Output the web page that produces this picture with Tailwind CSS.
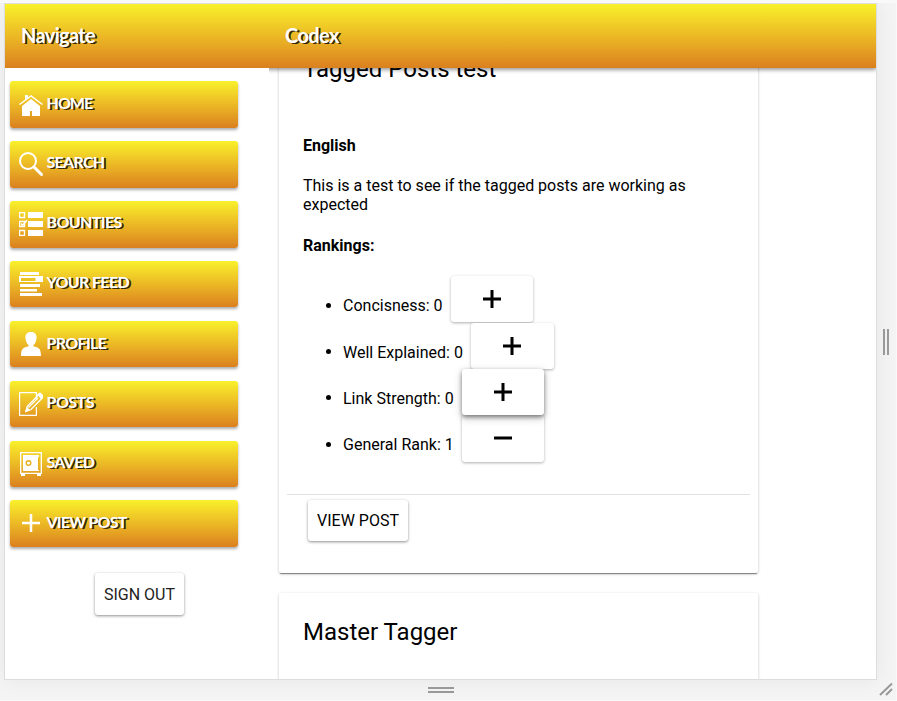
<!DOCTYPE html>
<html lang="en">
<head>
<meta charset="utf-8">
<title>Codex</title>
<script src="https://cdn.jsdelivr.net/npm/@tailwindcss/browser@4"></script>
</head>
<body class="w-[897px] h-[701px] overflow-hidden bg-[#f9f9f9] pt-[3px] font-['Roboto','Liberation_Sans',sans-serif] text-black">
<div class="relative h-[697px] w-[896px] bg-[#f4f4f4] overflow-hidden">
  <div class="ml-1 flex h-[677px] w-[873px] flex-col border border-[#ddd] bg-white shadow-[0_0_20px_rgba(0,0,0,0.06)]">
    <header class="relative z-10 flex h-16 shrink-0 items-center bg-linear-to-b from-[#f8f12b] to-[#da801f] shadow-[0_2px_4px_rgba(0,0,0,0.4)] [clip-path:inset(0_0_-8px_0)] font-['Lato',sans-serif] text-[20px] font-bold text-white [text-shadow:2px_1px_0_rgba(0,0,0,0.8)]">
      <h1 class="-mt-[2px] w-[264px] pl-4 tracking-[-0.65px]">Navigate</h1>
      <h2 class="-mt-[2px] pl-4 tracking-[-0.6px]">Codex</h2>
    </header>
    <div class="flex min-h-0 flex-1">
      <nav class="relative z-20 flex w-[264px] shrink-0 flex-col gap-[13.47px] bg-white pl-[5px] pt-[13.4px] font-['Lato',sans-serif] text-[16px] font-bold text-white">
        <a class="flex h-[46.4px] w-[228px] shrink-0 items-center gap-[3.500px] rounded-[3px] bg-linear-to-b from-[#f8f12b] to-[#da801f] pl-[9px] shadow-[0_2px_3px_rgba(0,0,0,0.32)]">
          <svg class="mt-[3px] size-6" viewBox="0 0 24 24" fill="#fff"><path d="M3 12 12 5l9 7v10h-8v-5h-2v5H3z"/><path d="M6 6V1h3v3" /><path d="M.5 10.500 12 2l11.500 8.500" fill="none" stroke="#fff" stroke-width="1.500"/></svg>
          <span class="-mt-[3px] tracking-[-0.95px] [text-shadow:2px_1px_0_rgba(0,0,0,0.8)]">HOME</span></a>
        <a class="flex h-[46.4px] w-[228px] shrink-0 items-center gap-[3.500px] rounded-[3px] bg-linear-to-b from-[#f8f12b] to-[#da801f] pl-[9px] shadow-[0_2px_3px_rgba(0,0,0,0.32)]">
          <svg class="-mt-px size-6" viewBox="0 0 24 24" fill="none" stroke="#fff" stroke-linecap="round"><circle cx="9" cy="9" r="8" stroke-width="2"/><path d="m15 15 7.500 7.500" stroke-width="3"/></svg>
          <span class="-mt-[4px] tracking-[-0.7px] [text-shadow:2px_1px_0_rgba(0,0,0,0.8)]">SEARCH</span></a>
        <a class="flex h-[46.4px] w-[228px] shrink-0 items-center gap-[3.500px] rounded-[3px] bg-linear-to-b from-[#f8f12b] to-[#da801f] pl-[9px] shadow-[0_2px_3px_rgba(0,0,0,0.32)]">
          <svg class="size-6" viewBox="0 0 24 24" fill="none" stroke="#fff"><path d="M.5.5h5v5h-5zM.5 9.500h5v5h-5zM.5 18.500h5v5h-5z" stroke-width="1.400"/><path d="m2 11.500 1.500 2L8 8" stroke-width="1.400"/><path d="M9 0h15v6H9zM9 9h15v6H9zM9 18h15v6H9z" fill="#fff" stroke="none"/></svg>
          <span class="-mt-[4px] tracking-[-0.6px] [text-shadow:2px_1px_0_rgba(0,0,0,0.8)]">BOUNTIES</span></a>
        <a class="flex h-[46.4px] w-[228px] shrink-0 items-center gap-[3.500px] rounded-[3px] bg-linear-to-b from-[#f8f12b] to-[#da801f] pl-[9px] shadow-[0_2px_3px_rgba(0,0,0,0.32)]">
          <svg class="size-6" viewBox="0 0 24 24" fill="#fff"><path d="M1 0h19v3H1zM0 4h24v6H0zM1 12h20v3H1zM1 17h17v2.500H1zM1 21h22v3H1z"/><path d="M2 6h14.500v3H2z" fill="#ebc424"/></svg>
          <span class="-mt-[4px] tracking-[-0.65px] [text-shadow:2px_1px_0_rgba(0,0,0,0.8)]">YOUR FEED</span></a>
        <a class="flex h-[46.4px] w-[228px] shrink-0 items-center gap-[3.500px] rounded-[3px] bg-linear-to-b from-[#f8f12b] to-[#da801f] pl-[9px] shadow-[0_2px_3px_rgba(0,0,0,0.32)]">
          <svg class="size-6" viewBox="0 0 24 24" fill="#fff"><path d="M12 0c4 0 6 2.500 5.500 6.500C17 10 16 12 14.500 13v1.500c5 .5 7.500 2 7.500 9.500H2c0-7.500 2.500-9 7.500-9.500V13C8 12 7 10 6.500 6.500 6 2.500 8 0 12 0z"/></svg>
          <span class="-mt-[3px] tracking-[-0.65px] [text-shadow:2px_1px_0_rgba(0,0,0,0.8)]">PROFILE</span></a>
        <a class="flex h-[46.4px] w-[228px] shrink-0 items-center gap-[3.500px] rounded-[3px] bg-linear-to-b from-[#f8f12b] to-[#da801f] pl-[9px] shadow-[0_2px_3px_rgba(0,0,0,0.32)]">
          <svg class="size-6" viewBox="0 0 24 24" fill="none" stroke="#fff"><path d="M17.400 7V.6H.6v22.800h16.800V15" stroke-width="1.200"/><path d="m20 2.500 3.500 3.300L12 17.500l-5 2 1.300-5.200z" stroke-width="1.300"/><path d="m19 2.500 2-1.500 3 3-2 2zM9.500 15.500 19 6M7 19l1-3 2 2z" stroke-width="1.300" fill="#fff"/></svg>
          <span class="-mt-[3px] tracking-[-0.5px] [text-shadow:2px_1px_0_rgba(0,0,0,0.8)]">POSTS</span></a>
        <a class="flex h-[46.4px] w-[228px] shrink-0 items-center gap-[3.500px] rounded-[3px] bg-linear-to-b from-[#f8f12b] to-[#da801f] pl-[9px] shadow-[0_2px_3px_rgba(0,0,0,0.32)]">
          <svg class="mt-px size-6" viewBox="0 0 24 24" fill="#fff"><path d="M1.700.7h20.600v20.600H1.700z" fill="none" stroke="#fff" stroke-width="1.300"/><path d="M4 3h16v2h-1v3h1v7h-1v3h1v1H4zM2 21h4v3H2zM18 21h4v3h-4z"/><circle cx="9.500" cy="11" r="2.300" fill="none" stroke="#e5b022" stroke-width="1.400"/><path d="M19.500 7v8" stroke="#e5b022"/></svg>
          <span class="-mt-[3px] tracking-[-0.7px] [text-shadow:2px_1px_0_rgba(0,0,0,0.8)]">SAVED</span></a>
        <a class="flex h-[46.4px] w-[228px] shrink-0 items-center gap-[3.500px] rounded-[3px] bg-linear-to-b from-[#f8f12b] to-[#da801f] pl-[9px] shadow-[0_2px_3px_rgba(0,0,0,0.32)]">
          <svg class="-mt-px size-6" viewBox="0 0 24 24" fill="none" stroke="#fff" stroke-width="2.500"><path d="M12 3v18M3 12h18"/></svg>
          <span class="-mt-1 tracking-[-0.75px] [text-shadow:2px_1px_0_rgba(0,0,0,0.8)]">VIEW POST</span></a>
        <button class="ml-[85px] mt-[12.500px] h-[42px] w-[89px] shrink-0 rounded-[3px] bg-white pt-[2px] font-['Roboto',sans-serif] font-normal text-[#222] shadow-[0_1px_3px_rgba(0,0,0,0.45)]">SIGN OUT</button>
      </nav>
      <main class="min-w-0 flex-1 overflow-hidden pl-[10px]">
        <article class="-mt-[38px] flex h-[543px] w-[479px] flex-col rounded-[2px] bg-white shadow-[0_1px_3px_rgba(0,0,0,0.25),0_2px_1px_-1px_rgba(0,0,0,0.4)]">
          <div class="flex flex-col px-6 pt-6 text-[16px] leading-[19px]">
            <h3 class="text-[24px] leading-[30px]">Tagged Posts test</h3>
            <b class="mt-[52px] font-bold">English</b>
            <p class="mt-[21px]">This is a test to see if the tagged posts are working as<br>expected</p>
            <b class="mt-[22px] font-bold">Rankings:</b>
            <ul class="mt-[21px] pl-10">
              <li class="relative flex h-[46.600px] gap-2"><i class="absolute -left-[17px] top-[26.500px] size-[5px] rounded-full bg-black"></i><span class="pt-[20px]">Concisness: 0</span><button class="flex h-[46px] w-[82.500px] justify-center rounded-[3px] bg-white pt-[11px] shadow-[0_1px_3px_rgba(0,0,0,0.32)]"><svg class="size-6" viewBox="0 0 24 24" stroke="#000" stroke-width="3"><path d="M12 3v18M3 12h18"/></svg></button></li>
              <li class="relative flex h-[46.4px] gap-2"><i class="absolute -left-[17px] top-[26.500px] size-[5px] rounded-full bg-black"></i><span class="pt-[20px]">Well Explained: 0</span><button class="flex h-[46.500px] w-[83px] justify-center rounded-[3px] bg-white pt-[11px] shadow-[0_1px_3px_rgba(0,0,0,0.32)]"><svg class="size-6" viewBox="0 0 24 24" stroke="#000" stroke-width="3"><path d="M12 3v18M3 12h18"/></svg></button></li>
              <li class="relative z-10 flex h-[46.4px] gap-2"><i class="absolute -left-[17px] top-[26.500px] size-[5px] rounded-full bg-black"></i><span class="pt-[20px]">Link Strength: 0</span><button class="flex h-[46.500px] w-[82.500px] justify-center rounded-[3px] bg-white pt-[11px] shadow-[0_2px_4px_rgba(0,0,0,0.45),0_3px_10px_rgba(0,0,0,0.2)]"><svg class="size-6" viewBox="0 0 24 24" stroke="#000" stroke-width="3"><path d="M12 3v18M3 12h18"/></svg></button></li>
              <li class="relative flex h-[46.4px] gap-2"><i class="absolute -left-[17px] top-[26.500px] size-[5px] rounded-full bg-black"></i><span class="pt-[20px]">General Rank: 1</span><button class="flex h-[46.500px] w-[82.500px] justify-center rounded-[3px] bg-white pt-[11px] shadow-[0_1px_3px_rgba(0,0,0,0.32)]"><svg class="size-6" viewBox="0 0 24 24" stroke="#000" stroke-width="3"><path d="M3 12h18"/></svg></button></li>
            </ul>
          </div>
          <div class="mx-2 mt-auto h-[79px] border-t border-[#e2e2e2] pl-[21px] pt-[5px]">
            <button class="h-[41px] w-[100px] rounded-[3px] bg-white text-[16px] shadow-[0_1px_3px_rgba(0,0,0,0.45)]">VIEW POST</button>
          </div>
        </article>
        <article class="mt-5 h-[200px] w-[479px] rounded-[2px] bg-white px-6 pt-6 shadow-[0_1px_3px_rgba(0,0,0,0.25),0_2px_1px_-1px_rgba(0,0,0,0.4)]">
          <h3 class="text-[24px] leading-[30px]">Master Tagger</h3>
        </article>
      </main>
    </div>
  </div>
  <div class="absolute left-[428px] top-[684px] h-[6px] w-[26px] border-y-2 border-[#999]"></div>
  <div class="absolute left-[883px] top-[326px] h-[26px] w-[6px] border-x-2 border-[#999]"></div>
  <svg class="absolute left-[879px] top-[679px] size-[14px]" viewBox="0 0 14 14" fill="none" stroke="#999" stroke-width="2"><path d="M1 13 13 1.500M7 13l6-6"/></svg>
</div>
</body>
</html>
